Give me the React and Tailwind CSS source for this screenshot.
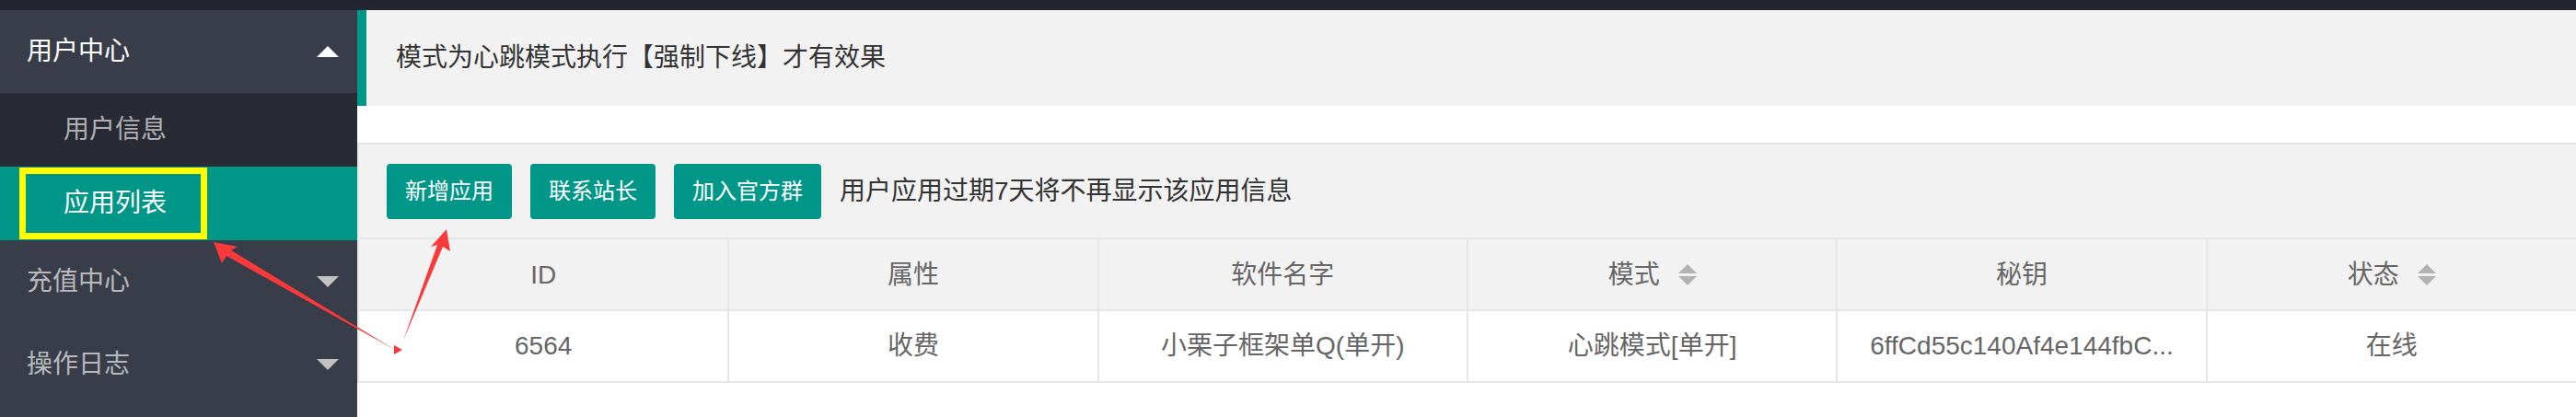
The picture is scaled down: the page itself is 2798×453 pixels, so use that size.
import React from "react";

const columns = [
  { key: "id", title: "ID" },
  { key: "attr", title: "属性" },
  { key: "name", title: "软件名字" },
  { key: "mode", title: "模式", sort: true },
  { key: "secret", title: "秘钥" },
  { key: "status", title: "状态", sort: true },
];

const rows = [
  {
    id: "6564",
    attr: "收费",
    name: "小栗子框架单Q(单开)",
    mode: "心跳模式[单开]",
    secret: "6ffCd55c140Af4e144fbC...",
    status: "在线",
  },
];

const SortIcon = () => (
  <span className="ml-[20px] inline-flex flex-col gap-[3px] align-middle">
    <span className="w-0 h-0 border-x-[10px] border-x-transparent border-b-[10px] border-b-[#b2b2b2]" />
    <span className="w-0 h-0 border-x-[10px] border-x-transparent border-t-[10px] border-t-[#b2b2b2]" />
  </span>
);

const Caret = ({ up, color }) =>
  up ? (
    <span className={`w-0 h-0 border-x-[12px] border-x-transparent border-b-[12px] ${color}`} />
  ) : (
    <span className={`w-0 h-0 border-x-[12px] border-x-transparent border-t-[12px] ${color}`} />
  );

const App = () => {
  return (
    <div className="relative w-[2798px] h-[453px] overflow-hidden bg-white font-['Liberation_Sans','Noto_Sans_CJK_SC',sans-serif]">
      {/* top bar */}
      <div className="h-[11px] bg-[#23262e]" />

      <div className="flex h-[442px]">
        {/* Sidebar */}
        <div className="w-[388px] shrink-0 bg-[#393d49] text-[28px] leading-none">
          <div className="h-[90px] flex items-center justify-between pl-[29px] pr-[20px] text-white">
            <span>用户中心</span>
            <Caret up color="border-b-white" />
          </div>
          <div className="bg-[#282b33]">
            <div className="h-[80px] flex items-center pl-[69px] text-[#b0b1b6]">
              用户信息
            </div>
            <div className="relative h-[80px] flex items-center pl-[69px] bg-[#009688] text-white">
              应用列表
              <div className="absolute left-[21px] top-[1px] w-[204px] h-[78px] border-[7px] border-[#ffff00]" />
            </div>
          </div>
          <div className="h-[90px] flex items-center justify-between pl-[29px] pr-[20px] text-[#b8b9bd]">
            <span>充值中心</span>
            <Caret color="border-t-[#c2c2c2]" />
          </div>
          <div className="h-[90px] flex items-center justify-between pl-[29px] pr-[20px] text-[#b8b9bd]">
            <span>操作日志</span>
            <Caret color="border-t-[#c2c2c2]" />
          </div>
        </div>

        {/* Main */}
        <div className="flex-1 min-w-0">
          <div className="h-[104px] flex items-center bg-[#f2f2f2] border-l-[10px] border-[#009688] pl-[32px] text-[28px] text-[#333]">
            模式为心跳模式执行【强制下线】才有效果
          </div>

          <div className="mt-[40px] border-l-2 border-[#e6e6e6]">
            {/* toolbar */}
            <div className="h-[103px] flex items-center gap-[20px] px-[30px] bg-[#f2f2f2] border-t-2 border-[#e6e6e6]">
              <button className="h-[60px] px-[20px] rounded-[4px] bg-[#009688] text-white text-[24px]">
                新增应用
              </button>
              <button className="h-[60px] px-[20px] rounded-[4px] bg-[#009688] text-white text-[24px]">
                联系站长
              </button>
              <button className="h-[60px] px-[20px] rounded-[4px] bg-[#009688] text-white text-[24px]">
                加入官方群
              </button>
              <span className="text-[28px] text-[#333]">用户应用过期7天将不再显示该应用信息</span>
            </div>

            {/* table */}
            <table className="w-full table-fixed border-collapse text-[28px] text-[#666]">
              <thead>
                <tr className="h-[78px] bg-[#f2f2f2]">
                  {columns.map((c, i) => (
                    <th
                      key={c.key}
                      className={`font-normal text-center border-t-2 border-b-2 border-[#e6e6e6] ${
                        i < columns.length - 1 ? "border-r-2" : ""
                      }`}
                    >
                      <span className="align-middle">{c.title}</span>
                      {c.sort && <SortIcon />}
                    </th>
                  ))}
                </tr>
              </thead>
              <tbody>
                {rows.map((r) => (
                  <tr key={r.id} className="h-[78px] bg-white">
                    {columns.map((c, i) => (
                      <td
                        key={c.key}
                        className={`px-[20px] text-center whitespace-nowrap border-b-2 border-[#e6e6e6] ${
                          i < columns.length - 1 ? "border-r-2" : ""
                        }`}
                      >
                        {r[c.key]}
                      </td>
                    ))}
                  </tr>
                ))}
              </tbody>
            </table>
          </div>
        </div>
      </div>

      {/* red annotation arrows */}
      <svg
        className="absolute left-0 top-0 pointer-events-none"
        width="2798"
        height="453"
        viewBox="0 0 2798 453"
      >
        <polygon
          fill="#f83a3a"
          points="232,263 258,268 251,272 429,380 246,278 241,286"
        />
        <polygon
          fill="#f83a3a"
          points="485,249 489,273 481,268 438,370 475,266 468,268"
        />
        <polygon fill="#f83a3a" points="428,375 437,380 428,385" />
      </svg>
    </div>
  );
};

export default App;
